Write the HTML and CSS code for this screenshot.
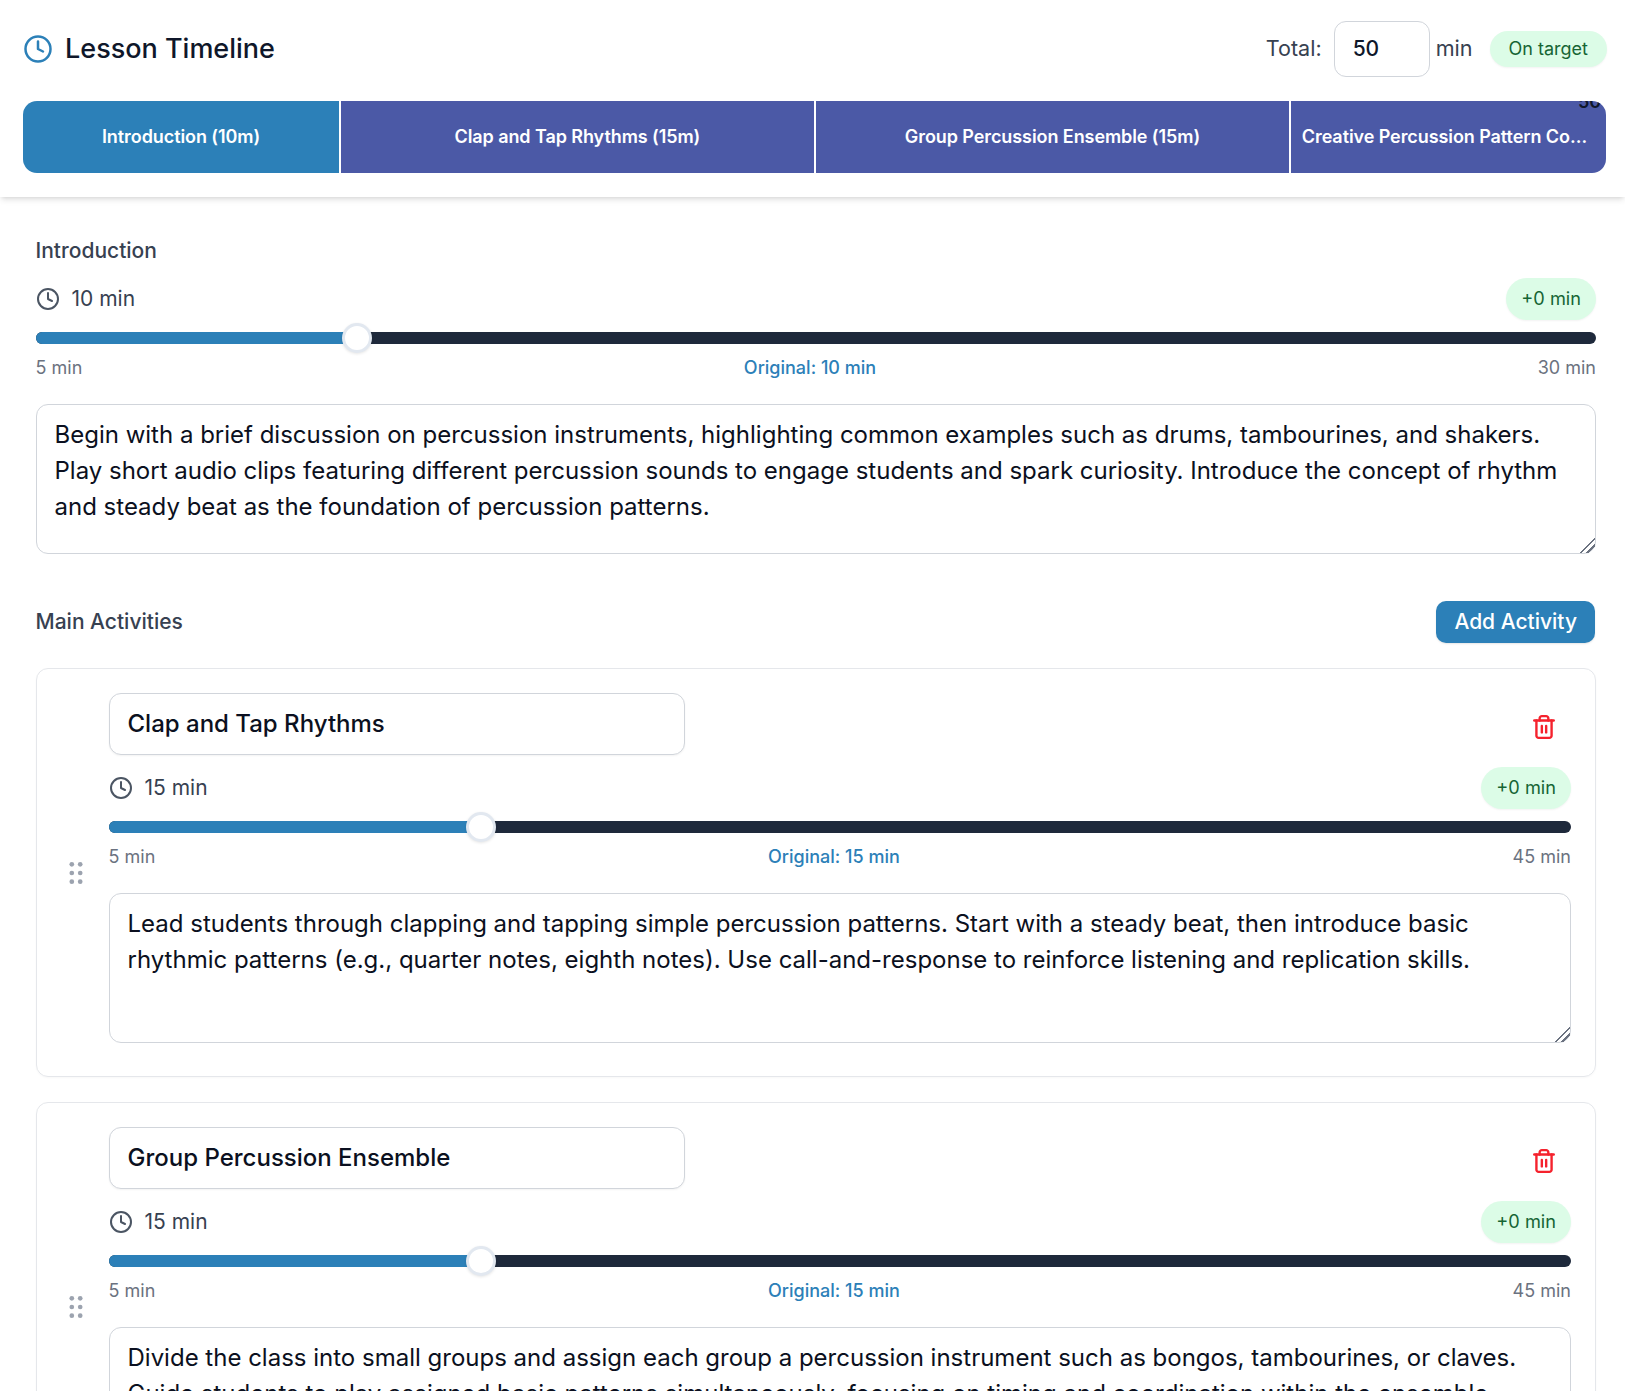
FILE: index.html
```html
<!DOCTYPE html>
<html lang="en">
<head>
<meta charset="utf-8">
<title>Lesson Timeline</title>
<link rel="stylesheet" href="styles.css">
</head>
<body>
<svg class="defs" width="0" height="0" aria-hidden="true">
  <symbol id="clock" viewBox="0 0 24 24"><circle cx="12" cy="12" r="10"/><polyline points="12 6 12 12 16 14"/></symbol>
  <symbol id="trash" viewBox="0 0 24 24"><path d="M3 6h18"/><path d="M19 6v14c0 1-1 2-2 2H7c-1 0-2-1-2-2V6"/><path d="M8 6V4c0-1 1-2 2-2h4c1 0 2 1 2 2v2"/><line x1="10" y1="11" x2="10" y2="17"/><line x1="14" y1="11" x2="14" y2="17"/></symbol>
  <symbol id="grip" viewBox="0 0 24 24"><circle cx="7.8" cy="3.3" r="2.35"/><circle cx="16.2" cy="3.3" r="2.35"/><circle cx="7.8" cy="12" r="2.35"/><circle cx="16.2" cy="12" r="2.35"/><circle cx="7.8" cy="20.7" r="2.35"/><circle cx="16.2" cy="20.7" r="2.35"/></symbol>
</svg>
<header class="top">
  <div class="top-row">
    <div class="title-wrap">
      <svg class="icon title-icon"><use href="#clock"/></svg>
      <h1 class="title">Lesson Timeline</h1>
    </div>
    <div class="total">
      <span class="total-label">Total:</span>
      <input class="total-input" value="50">
      <span class="total-unit">min</span>
      <span class="badge badge-lg">On target</span>
    </div>
  </div>
  <div class="timeline">
    <div class="seg seg-intro">Introduction (10m)</div>
    <div class="seg seg-main">Clap and Tap Rhythms (15m)</div>
    <div class="seg seg-main">Group Percussion Ensemble (15m)</div>
    <div class="seg seg-main seg-last"><span class="seg-text">Creative Percussion Pattern Composition (10m)</span><span class="seg-over">50</span></div>
  </div>
</header>
<main class="content">
  <section class="intro">
    <h2 class="section-label">Introduction</h2>
    <div class="dur-row">
      <div class="dur"><svg class="icon dur-icon"><use href="#clock"/></svg><span class="dur-text">10 min</span></div>
      <span class="badge">+0 min</span>
    </div>
    <div class="slider"><div class="fill" style="width:20.6%"></div><div class="thumb" style="left:20.6%"></div></div>
    <div class="scale"><span>5 min</span><span class="orig">Original: 10 min</span><span>30 min</span></div>
    <textarea class="notes" rows="4">Begin with a brief discussion on percussion instruments, highlighting common examples such as drums, tambourines, and shakers. Play short audio clips featuring different percussion sounds to engage students and spark curiosity. Introduce the concept of rhythm and steady beat as the foundation of percussion patterns.</textarea>
  </section>
  <div class="main-head">
    <h2 class="section-label">Main Activities</h2>
    <button class="add">Add Activity</button>
  </div>
  <article class="card">
    <svg class="grip"><use href="#grip"/></svg>
    <div class="card-body">
      <div class="name-row">
        <input class="name" value="Clap and Tap Rhythms">
        <svg class="icon trash"><use href="#trash"/></svg>
      </div>
      <div class="dur-row">
        <div class="dur"><svg class="icon dur-icon"><use href="#clock"/></svg><span class="dur-text">15 min</span></div>
        <span class="badge">+0 min</span>
      </div>
      <div class="slider"><div class="fill" style="width:25.5%"></div><div class="thumb" style="left:25.5%"></div></div>
      <div class="scale"><span>5 min</span><span class="orig">Original: 15 min</span><span>45 min</span></div>
      <textarea class="notes" rows="4">Lead students through clapping and tapping simple percussion patterns. Start with a steady beat, then introduce basic rhythmic patterns (e.g., quarter notes, eighth notes). Use call-and-response to reinforce listening and replication skills.</textarea>
    </div>
  </article>
  <article class="card">
    <svg class="grip"><use href="#grip"/></svg>
    <div class="card-body">
      <div class="name-row">
        <input class="name" value="Group Percussion Ensemble">
        <svg class="icon trash"><use href="#trash"/></svg>
      </div>
      <div class="dur-row">
        <div class="dur"><svg class="icon dur-icon"><use href="#clock"/></svg><span class="dur-text">15 min</span></div>
        <span class="badge">+0 min</span>
      </div>
      <div class="slider"><div class="fill" style="width:25.5%"></div><div class="thumb" style="left:25.5%"></div></div>
      <div class="scale"><span>5 min</span><span class="orig">Original: 15 min</span><span>45 min</span></div>
      <textarea class="notes" rows="4">Divide the class into small groups and assign each group a percussion instrument such as bongos, tambourines, or claves. Guide students to play assigned basic patterns simultaneously, focusing on timing and coordination within the ensemble.</textarea>
    </div>
  </article>
</main>
</body>
</html>
```
FILE: styles.css
```css
* { box-sizing: border-box; }
html, body { margin: 0; padding: 0; height: 1391px; overflow: hidden; }
body { font-family: Inter, "Liberation Sans", sans-serif; color: #1f2937; background: #fff; }
.defs { position: absolute; }
.icon { fill: none; stroke: currentColor; stroke-width: 2; stroke-linecap: round; stroke-linejoin: round; flex: none; }
.top { height: 197px; padding: 21px 19px 0 23px; box-shadow: 0 4px 6px -1px rgba(0,0,0,.1), 0 2px 4px -2px rgba(0,0,0,.1); background: #fff; position: relative; }
.top-row { display: flex; justify-content: space-between; align-items: center; height: 56px; }
.title-wrap { display: flex; align-items: center; gap: 12px; }
.title-icon { width: 30px; height: 30px; color: #2c80b8; }
.title { margin: 0 0 2px; font-size: 27px; font-weight: 450; color: #0f172a; }
.total { display: flex; align-items: center; gap: 6px; font-size: 21.6px; color: #374151; }
.total-label { margin-right: 6px; padding-bottom: 2px; }
.total-input { width: 96px; height: 56px; border: 1px solid #d1d5db; border-radius: 12px; padding: 0 18px 2px; font: 500 21px Inter, sans-serif; color: #0f172a; }
.total-unit { margin-right: 11px; padding-bottom: 2px; }
.badge { background: #dcfce7; color: #166534; border-radius: 999px; font-size: 18.2px; padding: 0 15px 2px; height: 42px; display: inline-flex; align-items: center; box-shadow: 0 1px 2px rgba(0,0,0,.05); }
.badge-lg { height: 36px; padding: 0 19px 2px; margin-right: -1px; font-size: 18px; }
.timeline { display: flex; margin-top: 24px; height: 72px; border-radius: 14px; overflow: hidden; position: relative; gap: 1.6px; background: #fff; }
.seg { display: flex; align-items: center; justify-content: center; color: #fff; font-size: 18px; font-weight: 600; letter-spacing: -.08px; padding: 0 11px 2px; }
.seg-intro { background: #2c80b8; flex: 0 0 316px; }
.seg-main { background: #4b59a6; flex: 0 0 473.5px; }
.seg-last { flex: 1 1 0; min-width: 0; position: relative; }
.seg-text { overflow: hidden; white-space: nowrap; text-overflow: ellipsis; }
.seg-over { position: absolute; right: 5px; top: -10px; color: #0f172a; }
.content { padding: 0 29px 0 35.5px; height: 1194px; overflow: hidden; }
.intro { padding-top: 41px; }
.section-label { margin: 0; font-size: 21px; font-weight: 500; color: #374151; }
.dur-row { display: flex; justify-content: space-between; align-items: center; height: 42px; }
.intro .dur-row { margin-top: 15px; }
.dur { display: flex; align-items: center; gap: 12px; font-size: 21px; color: #374151; }
.dur-text { padding-bottom: 2px; }
.dur-icon { width: 24px; height: 24px; color: #4b5563; }
.slider { height: 12px; background: #1e293b; border-radius: 6px; position: relative; margin-top: 12px; }
.fill { background: #2c80b8; height: 100%; border-radius: 6px 0 0 6px; }
.thumb { position: absolute; top: -9px; width: 30px; height: 30px; margin-left: -15px; border-radius: 50%; background: #fff; border: 3px solid #e2e8f0; box-shadow: 0 1px 3px rgba(0,0,0,.1); }
.scale { display: flex; justify-content: space-between; margin-top: 10px; font-size: 18px; color: #6b7280; line-height: 28px; }
.orig { color: #2c80b8; font-weight: 500; }
.notes { display: block; width: 100%; height: 150px; margin-top: 22px; border: 1px solid #d1d5db; border-radius: 12px; padding: 12px 18px; font: 400 24px/36px Inter, sans-serif; color: #0b1020; resize: vertical; }
.notes::-webkit-resizer { background: linear-gradient(135deg, transparent 0 48%, #6b7280 48% 56%, transparent 56% 70%, #6b7280 70% 78%, transparent 78%); }
.main-head { display: flex; justify-content: space-between; align-items: center; margin-top: 47px; height: 42px; }
.main-head .section-label { padding-bottom: 2px; }
.add { height: 42px; background: #2c80b8; color: #fff; border: 0; border-radius: 10px; font: 500 21px Inter, sans-serif; padding: 0 18px 2px; margin-right: 1px; box-shadow: 0 1px 2px rgba(0,0,0,.1); }
.card { display: flex; align-items: center; margin-top: 25px; border: 1px solid #e5e7eb; border-radius: 12px; padding-right: 24px; box-shadow: 0 1px 2px rgba(0,0,0,.03); }
.grip { width: 24px; height: 24px; margin: 0 21px 0 27px; flex: none; fill: #9ca3af; }
.card-body { flex: 1; min-width: 0; padding: 24px 0 33px; }
.name-row { display: flex; justify-content: space-between; align-items: center; height: 62px; }
.name { width: 576px; height: 62px; border: 1px solid #d1d5db; border-radius: 12px; padding: 0 18px 2px; font: 500 24px Inter, sans-serif; color: #0b1020; box-shadow: 0 1px 2px rgba(0,0,0,.05); }
.trash { width: 26px; height: 26px; color: #f5222d; stroke-width: 2.2; margin-right: 14px; margin-top: 6px; }
.card .dur-row { margin-top: 12px; }
```
